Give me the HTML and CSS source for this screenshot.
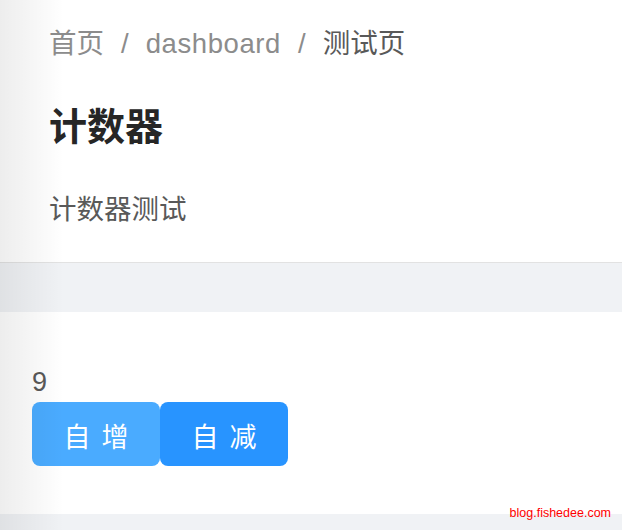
FILE: index.html
```html
<!DOCTYPE html>
<html lang="zh">
<head>
<meta charset="utf-8">
<link rel="stylesheet" href="styles.css">
</head>
<body>
<div class="app">
  <div class="page-header">
    <div class="breadcrumb">
      <span class="crumb">首页</span><span class="sep">/</span><span class="crumb latin">dashboard</span><span class="sep">/</span><span class="crumb current">测试页</span>
    </div>
    <h1 class="title">计数器</h1>
    <p class="desc">计数器测试</p>
  </div>
  <div class="gap"></div>
  <div class="content">
    <div class="count">9</div>
    <div class="buttons">
      <button class="btn btn-light"><span>自增</span></button><button class="btn btn-primary"><span>自减</span></button>
    </div>
  </div>
  <div class="footer"></div>
  <div class="shadow"></div>
  <div class="watermark">blog.fishedee.com</div>
</div>
</body>
</html>
```
FILE: styles.css
```css
html, body {
  margin: 0;
  padding: 0;
  background: #fff;
}
body {
  font-family: "Liberation Sans", "Noto Sans CJK SC", sans-serif;
}
.app {
  position: relative;
  width: 622px;
  height: 530px;
  overflow: hidden;
}
.page-header {
  background: #fff;
  padding: 24px 0 32px 49px;
  border-bottom: 1px solid #e2e2e2;
}
.breadcrumb {
  font-size: 27.5px;
  line-height: 40px;
  color: #8c8c8c;
  white-space: nowrap;
}
.latin {
  letter-spacing: 0.6px;
}
.sep {
  margin: 0 17px;
}
.current {
  color: #595959;
}
.title {
  margin: 35px 0 0;
  font-size: 38px;
  line-height: 56px;
  font-weight: 600;
  color: #262626;
}
.desc {
  margin: 35px 0 0;
  font-size: 27.5px;
  line-height: 40px;
  color: #595959;
}
.gap {
  height: 49px;
  background: #f0f2f5;
}
.content {
  background: #fff;
  padding: 50px 0 48px 32px;
}
.count {
  font-size: 27px;
  line-height: 40px;
  color: #595959;
}
.buttons {
  display: flex;
}
.btn {
  width: 128px;
  height: 64px;
  border: none;
  border-radius: 8px;
  color: #fff;
  font-family: "Noto Sans CJK SC", sans-serif;
  font-size: 27px;
  line-height: 64px;
  padding: 0;
  cursor: pointer;
}
.btn span {
  display: inline-block;
  letter-spacing: 0.4em;
  margin-right: -0.4em;
  padding-top: 2px;
}
.btn-light {
  background: #4aabff;
}
.btn-primary {
  background: #2894ff;
}
.footer {
  height: 20px;
  background: #f0f2f5;
}
.shadow {
  position: absolute;
  left: 0;
  top: 0;
  bottom: 0;
  width: 64px;
  background: linear-gradient(to right, rgba(0, 0, 0, 0.07), rgba(0, 0, 0, 0));
  pointer-events: none;
}
.watermark {
  position: absolute;
  right: 11px;
  top: 504px;
  font-family: "Liberation Sans", sans-serif;
  font-size: 12.5px;
  line-height: 18px;
  color: #ff0000;
}
```
